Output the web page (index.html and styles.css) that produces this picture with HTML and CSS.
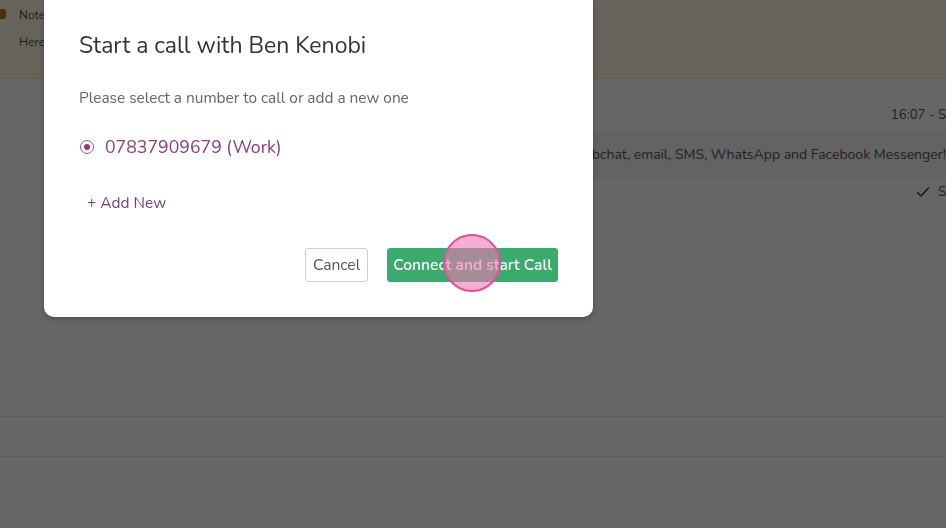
FILE: index.html
```html
<!DOCTYPE html>
<html lang="en">
<head>
  <meta charset="UTF-8" />
  <meta name="viewport" content="width=device-width, initial-scale=1.0" />
  <title>Start a call</title>
  <link rel="stylesheet" href="styles.css">
</head>
<body>
  <div class="page">
    <div class="note">
      <div class="note-title"><span class="note-icon"></span>Note</div>
      <div class="note-body">Here</div>
    </div>

    <div class="thread">
      <div class="meta">16:07 - S</div>
      <div class="bubble-row">
        <div class="bubble">Reach your customers via webchat, email, SMS, WhatsApp and Facebook Messenger!</div>
      </div>
      <div class="status">
        <svg width="14" height="12" viewBox="0 0 14 12"><path d="M1.5 6.5 L5 10 L12.5 2" fill="none" stroke="#333" stroke-width="1.4" stroke-linecap="round" stroke-linejoin="round"/></svg>
        <span>S</span>
      </div>
    </div>

    <div class="composer"></div>
  </div>

  <div class="overlay">
    <div class="modal">
      <h2 class="modal-title">Start a call with Ben Kenobi</h2>
      <p class="modal-hint">Please select a number to call or add a new one</p>

      <label class="option">
        <span class="radio"><span class="radio-dot"></span></span>
        <span>07837909679 (Work)</span>
      </label>

      <div class="add-new">+ Add New</div>

      <div class="actions">
        <button class="btn btn-cancel">Cancel</button>
        <button class="btn btn-primary">Connect and start Call</button>
        <span class="click-marker"></span>
      </div>
    </div>
  </div>
</body>
</html>
```

FILE: styles.css
```css
html, body {
  margin: 0;
  height: 100%;
  overflow: hidden;
}
body {
  font-family: "Nunito", Lato, "Noto Sans", sans-serif;
  background: #fff;
  color: #333;
}

.note {
  height: 79px;
  background: #fffae0;
  border-bottom: 1px solid #f0e2b0;
  padding-left: 19px;
  box-sizing: border-box;
  font-size: 12px;
  color: #5a4a2a;
}
.note-title {
  padding-top: 7px;
  line-height: 16px;
  position: relative;
}
.note-icon {
  position: absolute;
  left: -19px;
  top: 9px;
  width: 6px;
  height: 10px;
  background: #b07a2c;
  border-radius: 0 2px 2px 0;
}
.note-body {
  margin-top: 11px;
  line-height: 16px;
}

.thread {
  height: 337px;
  border-bottom: 1px solid #e3e3e3;
  font-size: 14px;
  color: #555;
}
.meta {
  text-align: right;
  margin-right: 0;
  padding-top: 27px;
  line-height: 18px;
  font-size: 13.2px;
}
.bubble-row {
  display: flex;
  justify-content: flex-end;
  margin-top: 7px;
  margin-right: -6px;
}
.bubble {
  background: #f7f7f7;
  padding: 14px 6px 14px 60px;
  line-height: 20px;
  white-space: nowrap;
}
.status {
  display: flex;
  justify-content: flex-end;
  align-items: center;
  gap: 8px;
  margin-right: 0;
  margin-top: 4px;
  font-size: 13.2px;
}

.composer {
  height: 39px;
  border-bottom: 1px solid #e3e3e3;
}

.overlay {
  position: fixed;
  inset: 0;
  background: rgba(0, 0, 0, 0.6);
}
.modal {
  margin: -10px 0 0 44px;
  width: 549px;
  box-sizing: border-box;
  background: #fff;
  border-radius: 10px;
  padding: 41px 35px 35px;
  box-shadow: 0 2px 6px rgba(0, 0, 0, 0.25);
}
.modal-title {
  margin: 0;
  font-size: 23px;
  line-height: 30px;
  font-weight: 400;
  color: #333;
}
.modal-hint {
  margin: 27px 0 0;
  font-size: 15.4px;
  line-height: 20px;
  color: #666;
}
.option {
  display: flex;
  align-items: center;
  gap: 11px;
  margin-top: 27px;
  line-height: 24px;
  font-size: 17.7px;
  color: #8a3e7c;
  padding-left: 1px;
}
.radio {
  width: 14px;
  height: 14px;
  border: 1.5px solid #8a5a80;
  border-radius: 50%;
  box-sizing: border-box;
  display: flex;
  align-items: center;
  justify-content: center;
}
.radio-dot {
  width: 6px;
  height: 6px;
  border-radius: 50%;
  background: #a5307a;
}
.add-new {
  margin-top: 34px;
  padding-left: 8px;
  font-size: 15.5px;
  line-height: 20px;
  color: #7a3d70;
}
.actions {
  display: flex;
  justify-content: flex-end;
  gap: 19px;
  margin-top: 35px;
  position: relative;
}
.btn {
  height: 34px;
  font-family: inherit;
  font-size: 15.6px;
  border-radius: 3px;
  padding: 0 8px;
  cursor: pointer;
}
.btn-cancel {
  background: #fff;
  border: 1px solid #cfcfcf;
  color: #555;
  padding: 0 7px;
}
.btn-primary {
  background: #3aab6d;
  border: 1px solid #3aab6d;
  color: #fff;
  font-weight: 600;
  padding: 0 5px;
}
.click-marker {
  position: absolute;
  left: 364px;
  top: -14px;
  width: 58px;
  height: 58px;
  border-radius: 50%;
  border: 2px solid #e0509a;
  background: rgba(240, 120, 180, 0.6);
  box-sizing: border-box;
}
```
